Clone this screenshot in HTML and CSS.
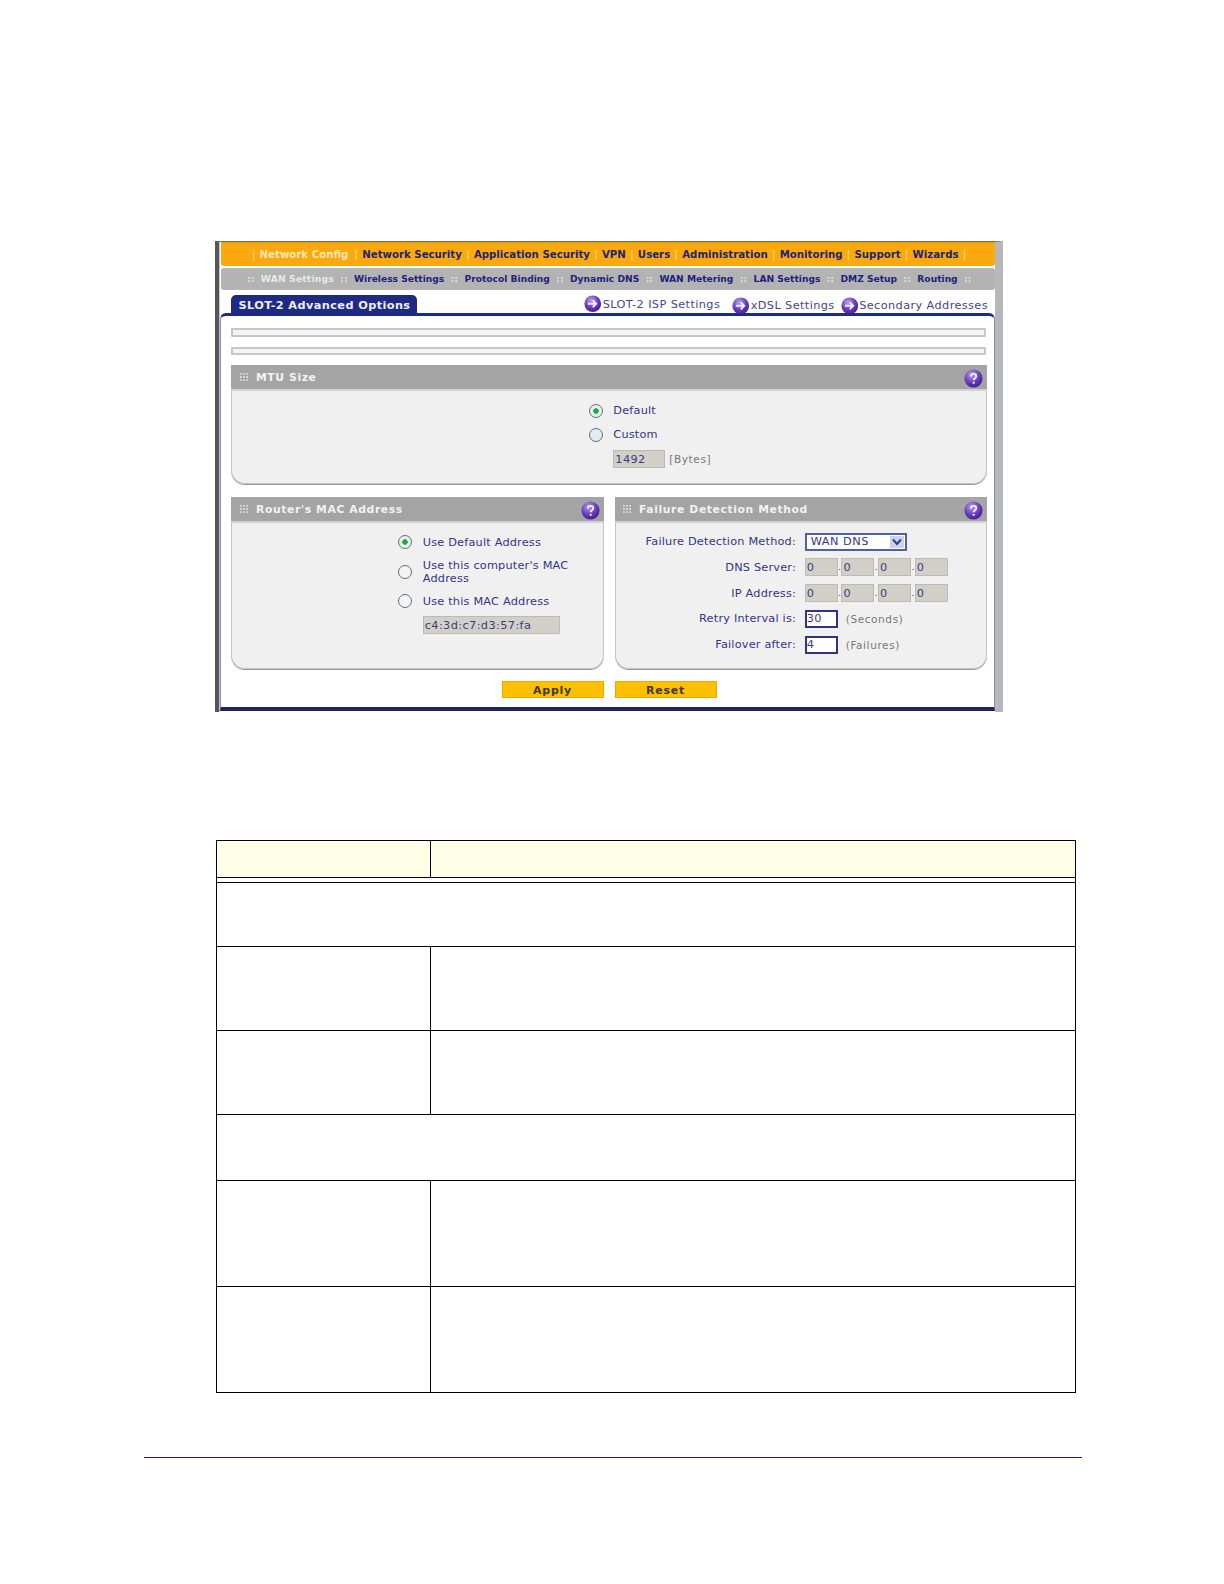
FILE: index.html
```html
<!DOCTYPE html>
<html lang="en">
<head>
<meta charset="utf-8">
<title>SLOT-2 Advanced Options</title>
<link rel="stylesheet" href="styles.css">
</head>
<body>
<svg class="defs" width="0" height="0" aria-hidden="true">
  <defs>
    <radialGradient id="orb" cx="40%" cy="30%" r="75%">
      <stop offset="0" stop-color="#b9a2ea"/>
      <stop offset=".55" stop-color="#6a3fc0"/>
      <stop offset="1" stop-color="#3a1c8c"/>
    </radialGradient>
    <symbol id="help" viewBox="0 0 20 20">
      <circle cx="10" cy="10" r="9.5" fill="url(#orb)"/>
      <path d="M7.2 7.8c0-1.7 1.3-2.7 2.9-2.7s2.8 1 2.8 2.4c0 2.3-2.7 2.2-2.7 4.3" fill="none" stroke="#f2eefc" stroke-width="1.9"/>
      <circle cx="10.2" cy="14.6" r="1.2" fill="#f2eefc"/>
    </symbol>
    <symbol id="go" viewBox="0 0 18 18">
      <circle cx="9" cy="9" r="8.6" fill="url(#orb)"/>
      <path d="M4 9h8M9 5.4 12.6 9 9 12.6" fill="none" stroke="#f2eefc" stroke-width="1.9"/>
    </symbol>
    <symbol id="grip" viewBox="0 0 9 9">
      <path d="M0 0h2v2H0zM3.500 0h2v2h-2zM7 0h2v2H7zM0 3.500h2v2H0zM3.500 3.500h2v2h-2zM7 3.500h2v2H7zM0 7h2v2H0zM3.500 7h2v2h-2zM7 7h2v2H7z" fill="#d9d9d9"/>
    </symbol>
  </defs>
</svg>

<main class="page">
  <section class="shot">
    <nav class="nav-main">
      <span class="sep">|</span><a class="active">Network Config</a>
      <span class="sep">|</span><a>Network Security</a>
      <span class="sep">|</span><a>Application Security</a>
      <span class="sep">|</span><a>VPN</a>
      <span class="sep">|</span><a>Users</a>
      <span class="sep">|</span><a>Administration</a>
      <span class="sep">|</span><a>Monitoring</a>
      <span class="sep">|</span><a>Support</a>
      <span class="sep">|</span><a>Wizards</a>
      <span class="sep">|</span>
    </nav>
    <nav class="nav-sub">
      <span class="dots">::</span><a class="active">WAN Settings</a>
      <span class="dots">::</span><a>Wireless Settings</a>
      <span class="dots">::</span><a>Protocol Binding</a>
      <span class="dots">::</span><a>Dynamic DNS</a>
      <span class="dots">::</span><a>WAN Metering</a>
      <span class="dots">::</span><a>LAN Settings</a>
      <span class="dots">::</span><a>DMZ Setup</a>
      <span class="dots">::</span><a>Routing</a>
      <span class="dots">::</span>
    </nav>
    <div class="tabrow">
      <div class="tab">SLOT-2 Advanced Options</div>
      <div class="links">
        <a class="link up"><svg class="go"><use href="#go"/></svg>SLOT-2 ISP Settings</a>
        <a class="link"><svg class="go"><use href="#go"/></svg>xDSL Settings</a>
        <a class="link"><svg class="go"><use href="#go"/></svg>Secondary Addresses</a>
      </div>
    </div>
    <div class="panel">
      <div class="empty-bar"></div>
      <div class="empty-bar"></div>

      <div class="box box-mtu">
        <h2 class="box-head"><svg class="grip"><use href="#grip"/></svg>MTU Size<svg class="help"><use href="#help"/></svg></h2>
        <div class="box-body mtu-body">
          <div class="radio-row"><span class="radio on"></span>Default</div>
          <div class="radio-row"><span class="radio tint"></span>Custom</div>
          <div class="radio-row"><span class="radio-gap"></span><span class="field w52">1492</span><span class="unit">[Bytes]</span></div>
        </div>
      </div>

      <div class="cols">
        <div class="box">
          <h2 class="box-head"><svg class="grip"><use href="#grip"/></svg>Router's MAC Address<svg class="help"><use href="#help"/></svg></h2>
          <div class="box-body mac-body">
            <div class="radio-row r1"><span class="radio on"></span>Use Default Address</div>
            <div class="radio-row r2"><span class="radio"></span><span>Use this computer's MAC<br>Address</span></div>
            <div class="radio-row r3"><span class="radio"></span>Use this MAC Address</div>
            <div class="radio-row r4"><span class="radio-gap"></span><span class="field w137">c4:3d:c7:d3:57:fa</span></div>
          </div>
        </div>
        <div class="box">
          <h2 class="box-head"><svg class="grip"><use href="#grip"/></svg>Failure Detection Method<svg class="help"><use href="#help"/></svg></h2>
          <div class="box-body fail-body">
            <div class="form-row"><label>Failure Detection Method:</label>
              <span class="select">WAN DNS<span class="arrow"><svg viewBox="0 0 10 8" width="10" height="8"><path d="M1 1.500 5 6l4-4.500" fill="none" stroke="#2f3f8f" stroke-width="2"/></svg></span></span>
            </div>
            <div class="form-row"><label>DNS Server:</label>
              <span class="ip"><span class="field w33">0</span><i>.</i><span class="field w33">0</span><i>.</i><span class="field w33">0</span><i>.</i><span class="field w33">0</span></span>
            </div>
            <div class="form-row"><label>IP Address:</label>
              <span class="ip"><span class="field w33">0</span><i>.</i><span class="field w33">0</span><i>.</i><span class="field w33">0</span><i>.</i><span class="field w33">0</span></span>
            </div>
            <div class="form-row"><label>Retry Interval is:</label><span class="field live w33">30</span><span class="unit wide">(Seconds)</span></div>
            <div class="form-row"><label>Failover after:</label><span class="field live w33">4</span><span class="unit wide">(Failures)</span></div>
          </div>
        </div>
      </div>

      <div class="actions">
        <span class="btn">Apply</span>
        <span class="btn">Reset</span>
      </div>
    </div>
  </section>

  <table class="doc-table">
    <colgroup><col class="c1"><col></colgroup>
    <tr class="r-head"><th></th><th></th></tr>
    <tr class="r-gap"><td colspan="2"></td></tr>
    <tr class="r-a"><td colspan="2"></td></tr>
    <tr class="r-b"><td></td><td></td></tr>
    <tr class="r-b"><td></td><td></td></tr>
    <tr class="r-a2"><td colspan="2"></td></tr>
    <tr class="r-c"><td></td><td></td></tr>
    <tr class="r-c"><td></td><td></td></tr>
  </table>

  <div class="foot-rule"></div>
</main>
</body>
</html>
```
FILE: styles.css
```css
* { box-sizing: border-box; }
html, body { margin: 0; padding: 0; background: #fff; }
body { font-family: "DejaVu Sans", Verdana, sans-serif; color: #34348a; }
.defs { position: absolute; }
.page { width: 1224px; height: 1584px; padding-top: 241px; overflow: hidden; }

/* screenshot frame */
.shot {
  width: 788px; height: 471px; margin-left: 215px;
  padding-left: 2px;
  background: #fff;
  border-left: 4px solid #565656;
  border-right: 8px solid #b4b8b8;
  border-top: 1px solid #77703f;
  box-shadow: inset 1px 0 0 #c4c4dc;
}
.nav-main, .nav-sub {
  display: flex; align-items: center; white-space: nowrap;
  font-weight: 700; border-radius: 0 0 3px 3px;
}
.nav-main {
  height: 24px; padding-left: 26.600px;
  background: linear-gradient(#d99c1e 0, #fba90e 2px);
  font-size: 10.200px; color: #24246e;
}
.nav-main .sep { width: 12px; text-align: center; color: #ffe09a; font-weight: 400; flex: none; }
.nav-main .active { color: #ffe6b0; margin-right: 2px; }
.nav-sub {
  height: 22px; margin-top: 2px; background: #b3b3b3; padding-left: 19.600px;
  font-size: 9.130px; color: #22227c; border-radius: 3px;
}
.nav-sub .dots { width: 20.200px; text-align: center; color: #e2e2e2; flex: none; }
.nav-sub .active { color: #e8e8e8; letter-spacing: .2px; }

.tabrow { display: flex; justify-content: space-between; align-items: flex-start; height: 18px; margin-top: 5px; padding-left: 10px; padding-right: 7px; }
.tab {
  width: 186px; height: 18px; background: #1f2a82; color: #eef;
  font-size: 11.300px; font-weight: 700; letter-spacing: .4px; line-height: 21px;
  padding-left: 7.500px; border-radius: 5px 5px 0 0; overflow: hidden;
}
.links { display: flex; gap: 6px; height: 18px; }
.link { display: flex; align-items: center; font-size: 11.300px; color: #45458f; letter-spacing: .4px; height: 18px; margin-top: 1.500px; white-space: nowrap; }
.link.up { margin-top: 0; margin-right: 6px; }
.go { width: 17.500px; height: 17.500px; margin-right: 1px; }

.panel {
  height: 398px; margin-left: -1px;
  border: 1px solid #8c8cb8; border-top: 3px solid #1f2a82; border-bottom: 4px solid #1f2460;
  border-radius: 6px 6px 0 0; padding: 12px 7px 0 10px;
}
.empty-bar { height: 9px; border: 2px solid #c6c6c6; border-radius: 1px; background: #f4f4f4; margin-right: 1px; margin-bottom: 10px; }
.empty-bar + .empty-bar { height: 8px; margin-bottom: 0; }

.box { position: relative; display: flex; flex-direction: column; background: #f0f0f0; border-radius: 0 0 14px 14px; box-shadow: inset 0 0 0 1px #c4c4c4, 0 1px 0 #9a9a9a; }
.box-mtu { margin-top: 10px; height: 119px; }
.box-head {
  position: relative; display: flex; align-items: center; margin: 0;
  height: 24px; background: #a4a4a4; color: #f2f2f2;
  font-size: 10.800px; font-weight: 700; letter-spacing: .6px; padding-left: 9px;
  box-shadow: 0 2px 0 #d2d2d2;
}
.box + .box .box-head { padding-left: 8px; }
.grip { width: 8px; height: 8px; margin-right: 8px; }
.help { position: absolute; right: 4px; top: 3.500px; width: 19px; height: 19px; }

.box-body { flex: 1; font-size: 11.300px; letter-spacing: .2px; }
.radio-row { display: flex; align-items: center; }
.radio { flex: none; width: 14px; height: 14px; border-radius: 50%; border: 1.500px solid #5c6f85; background: #f4f4f4; margin-right: 10.300px; }
.radio.tint { background: #e0ecf2; }
.radio.on { background: radial-gradient(circle, #29a34a 0 2.500px, #e3f1e6 3px); }
.radio-gap { width: 24.300px; flex: none; }
.mtu-body { padding: 9.500px 0 0 358px; }
.mtu-body .radio-row { height: 24.300px; }
.mac-body { padding: 9px 0 0 167.300px; }
.mac-body .radio { margin-right: 10.400px; }
.mac-body .radio-gap { width: 24.400px; }
.mac-body .r1 { height: 24px; }
.mac-body .r2 { height: 36px; line-height: 13.400px; }
.mac-body .r3 { height: 22px; }
.mac-body .r4 { height: 26px; }

.field {
  display: inline-flex; align-items: center; height: 18px; background: #d2cfc8;
  border: 1px solid #bdbab2; padding-left: 1px; color: #3d3d7a; flex: none; letter-spacing: .4px;
}
.field.live { background: #fff; border: 2px solid #33337f; padding-left: 0; }
.w52 { width: 52px; }
.w137 { width: 137px; }
.w33 { width: 33px; }
.unit { color: #777; font-size: 10.500px; margin-left: 4px; letter-spacing: .6px; }
.unit.wide { margin-left: 8px; }

.cols { display: grid; grid-template-columns: 373px 372px; gap: 11px; margin-top: 13px; }
.cols .box { height: 172px; }
.fail-body { padding-top: 7.800px; }
.form-row { display: flex; align-items: center; height: 25.750px; }
.form-row label { width: 181px; text-align: right; margin-right: 8.700px; flex: none; }
.select {
  position: relative; display: flex; align-items: center; width: 102px; height: 18px;
  background: #fff; border: 2px solid #5060a8; padding-left: 4px; letter-spacing: .5px;
}
.arrow { position: absolute; right: 1px; top: 1px; width: 14px; height: 12px; background: #c9d3ea; display: flex; align-items: center; justify-content: center; }
.ip { display: flex; align-items: center; }
.ip i { width: 3.700px; font-style: normal; text-align: center; font-size: 9px; }

.actions { display: flex; justify-content: center; gap: 11px; margin-top: 12px; }
.btn {
  display: block; width: 102px; height: 17px; background: #fdc000; border: 1px solid #f2a800;
  color: #3d3a10; font-size: 11px; font-weight: 700; text-align: center; line-height: 17px; letter-spacing: .8px;
}

/* document table */
.doc-table {
  table-layout: fixed; border-collapse: collapse;
  width: 860px; margin: 128px 0 0 216px;
}
.doc-table .c1 { width: 213.500px; }
.doc-table th, .doc-table td { border: 1px solid #000; padding: 0; }
.r-head th { height: 37px; background: #ffffe8; }
.r-gap td { height: 5px; }
.r-a td { height: 64px; }
.r-a2 td { height: 66px; }
.r-b td { height: 84px; }
.r-c td { height: 106px; }

.foot-rule { width: 938px; height: 1px; margin: 64px 0 0 144px; background: #1a1a8c; }
```
